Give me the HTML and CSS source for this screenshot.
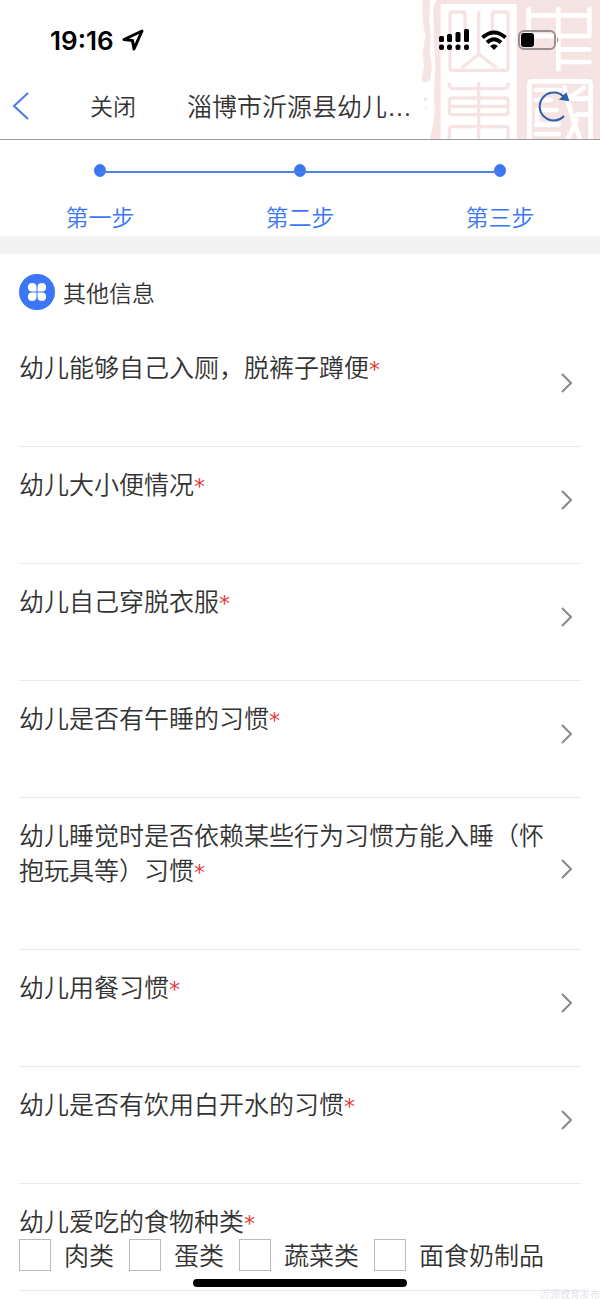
FILE: index.html
```html
<!DOCTYPE html>
<html lang="zh-CN">
<head>
    <meta charset="UTF-8">
    <meta name="viewport" content="width=device-width, initial-scale=1.0">
    <title>淄博市沂源县幼儿</title>
    <link rel="stylesheet" href="styles.css">
</head>
<body>
    <header class="top">
        <svg class="seal" viewBox="60 0 540 417" aria-hidden="true">
            <path class="seal-fill" d="M112 0H600V417H90L98 380L104 340L102 280L106 200L102 120L100 40Q100 8 112 0Z"/>
            <path class="seal-fill" d="M68 0H90L88 60L92 110L89 160L96 200L90 240L72 248L64 236L72 200L68 160L76 110L68 60ZM70 296Q76 286 84 298Q82 306 72 302ZM76 324Q82 320 81 328Q76 332 76 324Z"/>
            <path class="seal-bg" d="M122 12H350V417H122Z"/>
            <g class="seal-pink-line">
                <path d="M236 34V162L186 204M236 162L290 204"/>
                <path d="M150 36V205Q150 211 156 211H316Q324 211 324 203V42Q324 36 316 36H284Q277 36 277 44V98M150 36H188Q195 36 195 44V98"/>
                <path d="M236 246V417M148 248Q146 266 160 266H312Q326 266 324 248"/>
                <path d="M148 417V388Q148 380 156 380H314Q324 380 324 388V417"/>
                <path d="M156 294H316Q324 294 324 302V336Q324 344 316 344H156Q148 344 148 336V302Q148 294 156 294ZM148 319H324"/>
            </g>
            <g class="seal-white-line">
                <path d="M386 28V108M386 46H568M568 28V108M386 108H568M475 28V208M475 148H568M475 186H568"/>
                <path d="M388 417V252Q388 244 396 244H564Q572 244 572 252V417"/>
                <path d="M408 270H480M408 300H452M412 330H470M408 374H476M408 402H476M412 340V370M494 262Q510 340 540 417M552 262L510 292M568 296H506M568 344H530M530 360L504 417"/>
            </g>
        </svg>
        <div class="status">
            <div class="clock">
                <span>19:16</span>
                <svg class="locate" viewBox="0 0 22 22"><path d="M20 2L2 10.500L10.500 11.500L12 20Z"/></svg>
            </div>
            <div class="signals">
                <svg class="cell" viewBox="0 0 31 22">
                    <rect x="0" y="7" width="5" height="6" rx="1.500"/><rect x="8" y="5" width="5" height="8" rx="1.500"/><rect x="16.500" y="3" width="5" height="10" rx="1.500"/><rect x="25" y="0" width="5" height="13" rx="1.500"/>
                    <rect x="0" y="15.500" width="5" height="5.500" rx="2"/><rect x="8" y="15.500" width="5" height="5.500" rx="2"/><rect x="16.500" y="15.500" width="5" height="5.500" rx="2"/><rect x="25" y="15.500" width="5" height="5.500" rx="2"/>
                </svg>
                <svg class="wifi" viewBox="0 0 26 20">
                    <path d="M1.500 7.500Q13 -2.500 24.500 7.500M6 12.500Q13 6 20 12.500"/>
                    <path class="wifi-dot" d="M9 16Q13 12.500 17 16L13 20Z"/>
                </svg>
                <svg class="battery" viewBox="0 0 42 20">
                    <rect class="battery-case" x="1" y="1" width="36" height="18" rx="5"/>
                    <rect x="3" y="3" width="13" height="14" rx="3"/>
                    <path class="battery-tip" d="M39 7Q42 10 39 13Z"/>
                </svg>
            </div>
        </div>
        <nav class="nav">
            <button class="back" type="button" aria-label="返回">
                <svg viewBox="0 0 18 28"><path d="M16 1L2 14L16 27"/></svg>
            </button>
            <button class="close" type="button">关闭</button>
            <h1 class="title">淄博市沂源县幼儿<span class="dots">…</span></h1>
            <button class="refresh" type="button" aria-label="刷新">
                <svg viewBox="0 0 32 32"><path d="M26 26A14 14 0 1 1 26 7"/><path class="refresh-tip" d="M28 4L30 10L23 9Z"/></svg>
            </button>
        </nav>
    </header>

    <ol class="steps">
        <li>第一步</li>
        <li>第二步</li>
        <li>第三步</li>
    </ol>

    <main class="form">
        <h2 class="section">
            <svg class="section-icon" viewBox="0 0 36 36">
                <circle cx="18" cy="18" r="18"/>
                <path d="M17.500 17.500H13A4.300 4.300 0 1 1 17.500 13ZM18.500 17.500V13A4.300 4.300 0 1 1 23 17.500ZM17.500 18.500V23A4.300 4.300 0 1 1 13 18.500ZM18.500 18.500H23A4.300 4.300 0 1 1 18.500 23Z"/>
            </svg>
            其他信息
        </h2>

        <button class="row" type="button"><span class="label">幼儿能够自己入厕，脱裤子蹲便<em>*</em></span><svg class="arrow" viewBox="0 0 12 20"><path d="M1 1L10 10L1 19"/></svg></button>
        <button class="row" type="button"><span class="label">幼儿大小便情况<em>*</em></span><svg class="arrow" viewBox="0 0 12 20"><path d="M1 1L10 10L1 19"/></svg></button>
        <button class="row" type="button"><span class="label">幼儿自己穿脱衣服<em>*</em></span><svg class="arrow" viewBox="0 0 12 20"><path d="M1 1L10 10L1 19"/></svg></button>
        <button class="row" type="button"><span class="label">幼儿是否有午睡的习惯<em>*</em></span><svg class="arrow" viewBox="0 0 12 20"><path d="M1 1L10 10L1 19"/></svg></button>
        <button class="row" type="button"><span class="label">幼儿睡觉时是否依赖某些行为习惯方能入睡（怀抱玩具等）习惯<em>*</em></span><svg class="arrow" viewBox="0 0 12 20"><path d="M1 1L10 10L1 19"/></svg></button>
        <button class="row" type="button"><span class="label">幼儿用餐习惯<em>*</em></span><svg class="arrow" viewBox="0 0 12 20"><path d="M1 1L10 10L1 19"/></svg></button>
        <button class="row" type="button"><span class="label">幼儿是否有饮用白开水的习惯<em>*</em></span><svg class="arrow" viewBox="0 0 12 20"><path d="M1 1L10 10L1 19"/></svg></button>

        <fieldset class="foods">
            <legend>幼儿爱吃的食物种类<em>*</em></legend>
            <div class="options">
                <label><input type="checkbox" name="food">肉类</label>
                <label><input type="checkbox" name="food">蛋类</label>
                <label><input type="checkbox" name="food">蔬菜类</label>
                <label><input type="checkbox" name="food">面食奶制品</label>
            </div>
        </fieldset>
    </main>

    <div class="home-bar"></div>
    <div class="watermark">沂源教育发布</div>
</body>
</html>
```

FILE: styles.css
```css
* {
    box-sizing: border-box;
}
body {
    margin: 0;
    position: relative;
    padding-bottom: 8px;
    background: #fff;
    color: #333;
    font-family: "Noto Sans CJK SC", sans-serif;
    font-size: 25px;
    font-weight: 350;
    line-height: 35px;
}
button {
    padding: 0;
    border: 0;
    background: none;
    color: inherit;
    font: inherit;
}
svg {
    display: block;
    fill: none;
}
em {
    color: #e03c3c;
    font-family: "DejaVu Sans", sans-serif;
    font-size: 22px;
    font-style: normal;
    font-weight: 400;
    line-height: 1;
}

/* header */
.top {
    position: relative;
    border-bottom: 1px solid #999;
}
.seal {
    position: absolute;
    top: 0;
    right: 0;
    width: 180px;
    height: 139px;
}
.seal-fill {
    fill: #f6e4e4;
}
.seal-bg {
    fill: #fff;
}
.seal-pink-line {
    stroke: #f6e4e4;
    stroke-width: 10;
}
.seal-white-line {
    stroke: #fff;
    stroke-width: 14;
    stroke-linecap: round;
}
.status {
    position: relative;
    display: flex;
    justify-content: space-between;
    align-items: center;
    height: 72px;
    padding: 8px 40px 0 50px;
}
.clock {
    display: flex;
    align-items: center;
    gap: 8px;
    color: #000;
    font-family: Inter, sans-serif;
    font-size: 26px;
    font-weight: 600;
}
.locate {
    width: 22px;
    height: 22px;
    stroke: #000;
    stroke-width: 3;
    stroke-linejoin: round;
}
.signals {
    display: flex;
    align-items: center;
    gap: 11px;
}
.signals svg {
    fill: #000;
}
.cell {
    width: 31px;
    height: 22px;
}
.signals .wifi {
    width: 26px;
    height: 20px;
    fill: none;
    stroke: #000;
    stroke-width: 4;
}
.wifi .wifi-dot {
    fill: #000;
    stroke: none;
}
.battery {
    width: 42px;
    height: 20px;
}
.battery .battery-case {
    fill: none;
    stroke: #9a9090;
    stroke-width: 2;
}
.battery .battery-tip {
    fill: #9a9090;
}
.nav {
    position: relative;
    display: flex;
    align-items: center;
    height: 67px;
    padding: 0 30px 0 12px;
}
.back svg {
    width: 18px;
    height: 28px;
    stroke: #4a7ae8;
    stroke-width: 2;
}
.close {
    margin-left: 60px;
    font-size: 23px;
}
.title {
    flex: 1;
    margin: 0 0 0 51px;
    font-size: 25px;
    font-weight: 350;
}
.dots {
    font-family: "Liberation Sans", sans-serif;
    line-height: 1;
}
.refresh svg {
    width: 32px;
    height: 32px;
    stroke: #2e5fa8;
    stroke-width: 2;
}
.refresh .refresh-tip {
    fill: #2e5fa8;
}

/* progress */
.steps {
    display: flex;
    height: 114px;
    margin: 0;
    padding: 0;
    border-bottom: 18px solid #f3f3f3;
    list-style: none;
    color: #3b76f6;
    font-size: 23px;
}
.steps li {
    position: relative;
    flex: 1;
    padding-top: 59px;
    text-align: center;
}
.steps li::before {
    content: "";
    position: absolute;
    top: 24px;
    left: 50%;
    width: 12px;
    height: 13px;
    margin-left: -6px;
    border-radius: 50%;
    background: #3b76f6;
}
.steps li + li::after {
    content: "";
    position: absolute;
    top: 31px;
    right: 50%;
    width: 100%;
    height: 2px;
    background: #4a83d8;
}

/* form */
.form {
    padding: 0 19px;
}
.section {
    display: flex;
    align-items: center;
    gap: 8px;
    height: 76px;
    margin: 0;
    font-size: 23px;
    font-weight: 350;
}
.section-icon {
    width: 36px;
    height: 36px;
    fill: #3b76f6;
}
.section-icon path {
    fill: #fff;
}
.row {
    display: flex;
    align-items: center;
    justify-content: space-between;
    width: 100%;
    padding: 19px 8px 29px 0;
    border-bottom: 1px solid #e8e8e8;
    text-align: left;
}
.label {
    padding-bottom: 33px;
}
.arrow {
    flex: none;
    width: 12px;
    height: 20px;
    stroke: #888;
    stroke-width: 2;
}
.foods {
    min-width: 0;
    margin: 0;
    padding: 19px 0;
    border: 0;
    border-bottom: 1px solid #e8e8e8;
}
.foods legend {
    float: left;
    padding: 0 0 1px;
}
.options {
    display: flex;
    flex-wrap: wrap;
    clear: both;
    gap: 15px;
}
.options label {
    display: flex;
    gap: 13px;
    height: 32px;
    line-height: 30px;
}
.options input {
    appearance: none;
    width: 32px;
    height: 32px;
    margin: 0;
    border: 1px solid #bbb;
    background: #fff;
}

.home-bar {
    position: absolute;
    bottom: 12px;
    left: 50%;
    width: 214px;
    height: 8px;
    margin-left: -107px;
    border-radius: 4px;
    background: #000;
}
.watermark {
    position: absolute;
    right: 0;
    bottom: 0;
    color: #dfe3ec;
    font-size: 10px;
    line-height: 10px;
}
```
